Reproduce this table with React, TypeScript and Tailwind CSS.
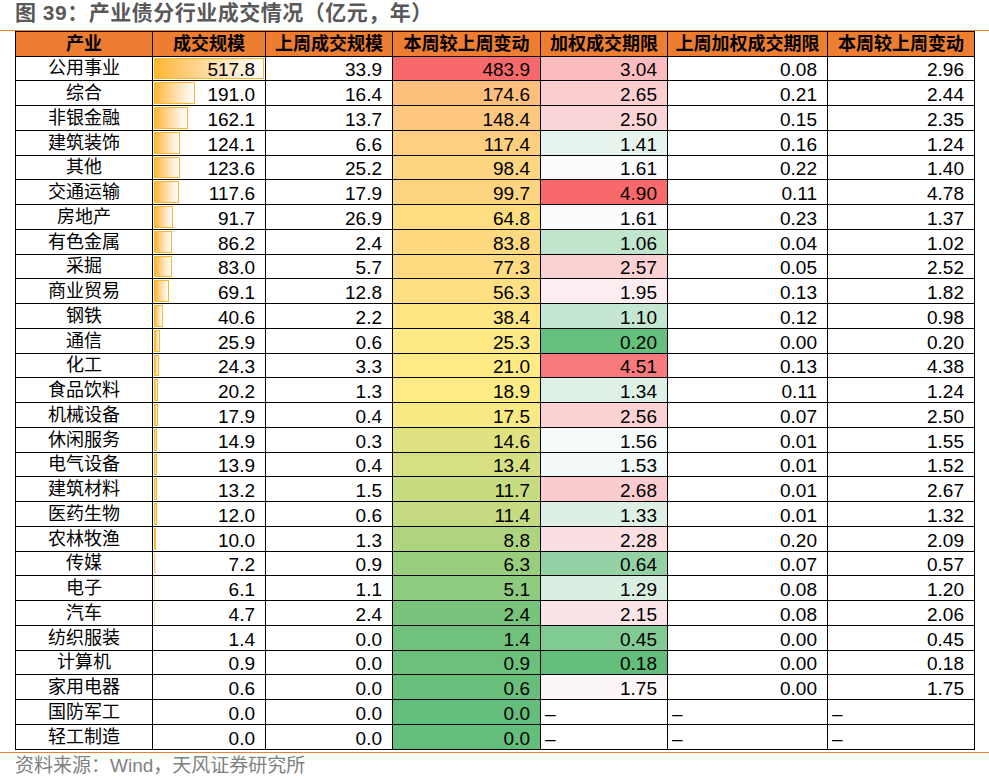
// 产业债分行业成交情况 table
type Row = [string, number, number, number, number | null, number | null, number | null]

const ROWS: Row[] = [
    ['公用事业', 517.8, 33.9, 483.9, 3.04, 0.08, 2.96],
    ['综合', 191.0, 16.4, 174.6, 2.65, 0.21, 2.44],
    ['非银金融', 162.1, 13.7, 148.4, 2.5, 0.15, 2.35],
    ['建筑装饰', 124.1, 6.6, 117.4, 1.41, 0.16, 1.24],
    ['其他', 123.6, 25.2, 98.4, 1.61, 0.22, 1.4],
    ['交通运输', 117.6, 17.9, 99.7, 4.9, 0.11, 4.78],
    ['房地产', 91.7, 26.9, 64.8, 1.61, 0.23, 1.37],
    ['有色金属', 86.2, 2.4, 83.8, 1.06, 0.04, 1.02],
    ['采掘', 83.0, 5.7, 77.3, 2.57, 0.05, 2.52],
    ['商业贸易', 69.1, 12.8, 56.3, 1.95, 0.13, 1.82],
    ['钢铁', 40.6, 2.2, 38.4, 1.1, 0.12, 0.98],
    ['通信', 25.9, 0.6, 25.3, 0.2, 0.0, 0.2],
    ['化工', 24.3, 3.3, 21.0, 4.51, 0.13, 4.38],
    ['食品饮料', 20.2, 1.3, 18.9, 1.34, 0.11, 1.24],
    ['机械设备', 17.9, 0.4, 17.5, 2.56, 0.07, 2.5],
    ['休闲服务', 14.9, 0.3, 14.6, 1.56, 0.01, 1.55],
    ['电气设备', 13.9, 0.4, 13.4, 1.53, 0.01, 1.52],
    ['建筑材料', 13.2, 1.5, 11.7, 2.68, 0.01, 2.67],
    ['医药生物', 12.0, 0.6, 11.4, 1.33, 0.01, 1.32],
    ['农林牧渔', 10.0, 1.3, 8.8, 2.28, 0.2, 2.09],
    ['传媒', 7.2, 0.9, 6.3, 0.64, 0.07, 0.57],
    ['电子', 6.1, 1.1, 5.1, 1.29, 0.08, 1.2],
    ['汽车', 4.7, 2.4, 2.4, 2.15, 0.08, 2.06],
    ['纺织服装', 1.4, 0.0, 1.4, 0.45, 0.0, 0.45],
    ['计算机', 0.9, 0.0, 0.9, 0.18, 0.0, 0.18],
    ['家用电器', 0.6, 0.0, 0.6, 1.75, 0.0, 1.75],
    ['国防军工', 0.0, 0.0, 0.0, null, null, null],
    ['轻工制造', 0.0, 0.0, 0.0, null, null, null],
]

const HEADERS = ['产业', '成交规模', '上周成交规模', '本周较上周变动', '加权成交期限', '上周加权成交期限', '本周较上周变动']

const BAR_MAX = 110
const VOL_MAX = 517.8

// excel style 3-colour scale
function rgb(h: string) {
    return [1, 3, 5].map(i => parseInt(h.slice(i, i + 2), 16))
}

function mix(a: string, b: string, t: number) {
    const x = rgb(a)
    const y = rgb(b)
    const c = x.map((v, i) => Math.round(v + (y[i] - v) * t))
    return `rgb(${c[0]}, ${c[1]}, ${c[2]})`
}

function scale(v: number, min: number, mid: number, max: number, lo: string, md: string, hi: string) {
    if (v <= mid) return mix(lo, md, (v - min) / (mid - min))
    return mix(md, hi, (v - mid) / (max - mid))
}

function chgColor(v: number) {
    return scale(v, 0, 18.2, 483.9, '#63BE7B', '#FFEB84', '#F8696B')
}

function termColor(v: number) {
    return scale(v, 0.18, 1.61, 4.9, '#63BE7B', '#FCFCFF', '#F8696B')
}

const cell = 'border-r border-b border-black flex items-end'
const num = `${cell} justify-end pr-[10px] text-[19px] leading-[20px]`
const dash = `${cell} justify-start pl-[4px] text-[19px] leading-[20px]`

function Num({ v, digits, bg }: { v: number | null; digits: number; bg?: string }) {
    if (v === null) return <div className={dash}>–</div>
    return (
        <div className={num} style={bg ? { backgroundColor: bg } : undefined}>
            {v.toFixed(digits)}
        </div>
    )
}

function App() {
    return (
        <div className="w-[989px] h-[776px] bg-white text-black font-['Liberation_Sans','Noto_Sans_CJK_SC',sans-serif]">
            <div className="h-[30px] pl-[15px] text-[21px] leading-[26px] tracking-[0.5px] font-bold text-[#595959]">
                图 39：产业债分行业成交情况（亿元，年）
            </div>
            <div className="h-px bg-[#ED7D31]" />

            <div className="ml-[15px] w-[960px] border-l border-t border-black">
                <div className="grid grid-cols-[137px_113px_127px_148px_127px_160px_147px] h-[24.5px] bg-[#ED7D31]">
                    {HEADERS.map((h, i) => (
                        <div key={i} className="border-r border-b border-black flex items-center justify-center text-[18px] leading-[20px] font-bold">
                            {h}
                        </div>
                    ))}
                </div>

                {ROWS.map(r => {
                    const w = (r[1] / VOL_MAX) * BAR_MAX
                    return (
                        <div key={r[0]} className="grid grid-cols-[137px_113px_127px_148px_127px_160px_147px] h-[24.75px]">
                            <div className={`${cell} justify-center pb-[2px] text-[18px] leading-[20px]`}>{r[0]}</div>
                            <div className={`${num} relative`}>
                                {w >= 0.5 && (
                                    <div
                                        className={`absolute left-[1px] top-[1px] bottom-[1px] bg-linear-to-r from-[#FFB628] to-white ${w >= 2 ? 'border border-[#FFB628]' : ''}`}
                                        style={{ width: w }}
                                    />
                                )}
                                <span className="relative">{r[1].toFixed(1)}</span>
                            </div>
                            <Num v={r[2]} digits={1} />
                            <Num v={r[3]} digits={1} bg={chgColor(r[3])} />
                            <Num v={r[4]} digits={2} bg={r[4] === null ? undefined : termColor(r[4])} />
                            <Num v={r[5]} digits={2} />
                            <Num v={r[6]} digits={2} />
                        </div>
                    )
                })}
            </div>

            <div className="mt-[2px] h-px bg-[#ED7D31]" />
            <div className="pl-[15px] pt-[1px] text-[19px] leading-[24px] text-[#7F7F7F]">
                资料来源：Wind，天风证券研究所
            </div>
        </div>
    )
}

export default App
